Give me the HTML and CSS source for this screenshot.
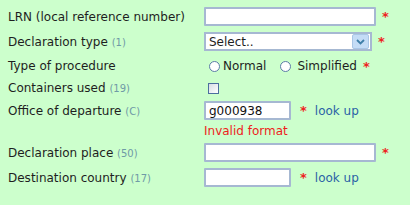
FILE: index.html
```html
<!DOCTYPE html>
<html lang="en">
<head>
  <meta charset="UTF-8" />
  <title>Declaration</title>
  <link rel="stylesheet" href="styles.css">
</head>
<body>
  <form class="decl-form">
    <div class="row">
      <label class="lbl">LRN (local reference number)</label>
      <div class="field">
        <input type="text" class="txt wide" />
        <span class="req">*</span>
      </div>
    </div>
    <div class="row">
      <label class="lbl">Declaration type <span class="hint">(1)</span></label>
      <div class="field">
        <div class="select">
          <span>Select..</span>
          <span class="drop">
            <svg width="9" height="6" viewBox="0 0 9 6"><path d="M1 1 L4.5 4.5 L8 1" fill="none" stroke="#3f7fa8" stroke-width="1.8"/></svg>
          </span>
        </div>
        <span class="req">*</span>
      </div>
    </div>
    <div class="row proc">
      <label class="lbl">Type of procedure</label>
      <div class="field">
        <span class="radio"></span><span class="opt">Normal</span>
        <span class="radio second"></span><span class="opt wide-gap">Simplified</span>
        <span class="req">*</span>
      </div>
    </div>
    <div class="row short">
      <label class="lbl">Containers used <span class="hint">(19)</span></label>
      <div class="field">
        <span class="check"></span>
      </div>
    </div>
    <div class="row">
      <label class="lbl">Office of departure <span class="hint">(C)</span></label>
      <div class="field">
        <input type="text" class="txt narrow" value="g000938" />
        <span class="req gap">*</span>
        <a class="lookup" href="#">look up</a>
      </div>
    </div>
    <div class="error">Invalid format</div>
    <div class="row">
      <label class="lbl">Declaration place <span class="hint">(50)</span></label>
      <div class="field">
        <input type="text" class="txt wide" />
        <span class="req">*</span>
      </div>
    </div>
    <div class="row">
      <label class="lbl">Destination country <span class="hint">(17)</span></label>
      <div class="field">
        <input type="text" class="txt narrow" />
        <span class="req gap">*</span>
        <a class="lookup" href="#">look up</a>
      </div>
    </div>
  </form>
</body>
</html>
```

FILE: styles.css
```css
body {
  margin: 0;
  background: #ccffcc;
  font-family: 'DejaVu Sans', Verdana, sans-serif;
  font-size: 12px;
  color: #1e1e1e;
}

.decl-form {
  padding: 4px 0 0 8px;
}

.row {
  display: flex;
  align-items: center;
  height: 25px;
}

.row.proc {
  height: 24px;
}

.row.short {
  height: 20px;
}

.lbl {
  width: 196px;
  flex-shrink: 0;
}

.hint {
  font-size: 10px;
  color: #6f9aa6;
}

.field {
  display: flex;
  align-items: center;
}

.txt {
  box-sizing: border-box;
  height: 19px;
  border: 2px solid #a6b8d2;
  border-radius: 1px;
  background: #fff;
  font-family: inherit;
  font-size: 12px;
  padding: 0 3px;
  margin: 0;
  color: #111;
}

.wide {
  width: 172px;
}

.narrow {
  width: 87px;
}

.req {
  color: #ee2222;
  font-weight: bold;
  margin-left: 6px;
  font-size: 13px;
}

.req.gap {
  margin-left: 9px;
}

.select {
  box-sizing: border-box;
  width: 168px;
  height: 19px;
  border: 2px solid #a6b8d2;
  background: #fff;
  display: flex;
  align-items: center;
  justify-content: space-between;
  padding-left: 3px;
}

.drop {
  width: 15px;
  height: 13px;
  margin-right: 1px;
  background: #c4dcf6;
  border: 1px solid #a9c6e6;
  border-radius: 2px;
  display: flex;
  align-items: center;
  justify-content: center;
}

.radio {
  box-sizing: border-box;
  width: 11px;
  height: 11px;
  border: 1.5px solid #5b7da6;
  border-radius: 50%;
  background: #fff;
  margin-left: 5px;
}

.radio.second {
  margin-left: 14px;
}

.opt {
  margin-left: 3px;
}

.opt.wide-gap {
  margin-left: 6px;
}

.check {
  box-sizing: border-box;
  width: 11px;
  height: 11px;
  border: 1.5px solid #4c6f9e;
  background: linear-gradient(135deg, #d8dde4, #ffffff);
  margin-left: 4px;
}

.lookup {
  color: #2a62a6;
  text-decoration: none;
  margin-left: 8px;
}

.error {
  color: #ee1c1c;
  margin-left: 196px;
  padding-top: 2px;
  height: 15px;
  line-height: 13px;
}
```
